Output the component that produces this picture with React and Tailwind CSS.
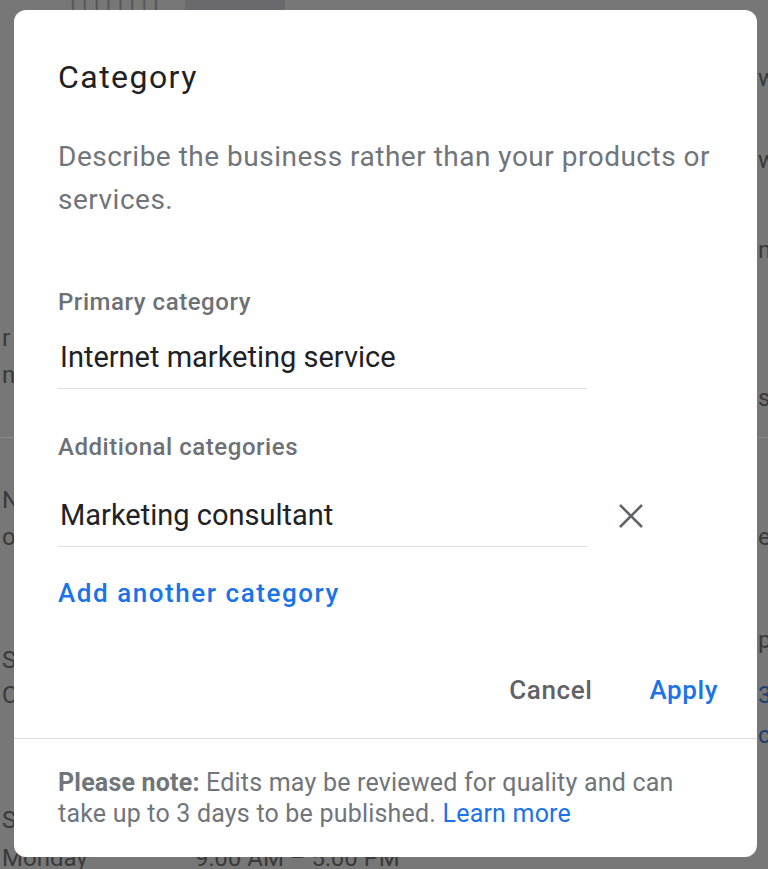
import React from "react";

function XIcon() {
  return (
    <svg width="28" height="28" viewBox="0 0 28 28" className="shrink-0">
      <path d="M3 3 L25 25 M25 3 L3 25" stroke="#5f6368" strokeWidth="2.5" fill="none" />
    </svg>
  );
}

function BgRow({ h, left, right, leftMt = "", rightMt = "", rightBlue = false }) {
  return (
    <div className={`flex items-start ${h}`}>
      <div className={`w-[758px] pl-[2px] shrink-0 ${leftMt}`}>
        <span className="leading-[36px]">{left}</span>
      </div>
      <div className={`${rightMt} ${rightBlue ? "text-[#1f3f70]" : ""}`}>
        <span className="leading-[36px]">{right}</span>
      </div>
    </div>
  );
}

export default function App() {
  return (
    <div
      className="relative w-[768px] h-[869px] overflow-hidden bg-[#777777] text-[#3a3a3a] text-[24px]"
      style={{ fontFamily: "Roboto, 'Noto Sans', sans-serif" }}
    >
      {/* background page (dimmed) */}
      <div className="flex flex-col">
        <div className="h-[60px] flex items-start gap-[20px] pl-[70px]">
          <span className="leading-[8px] text-[#555] tracking-[6px]">||||||||</span>
          <div className="w-[100px] h-[10px] bg-[#6a6a6e]" />
        </div>
        <BgRow h="h-[36px]" right="w" />
        <div className="h-[46px]" />
        <BgRow h="h-[36px]" right="w" />
        <div className="h-[54px]" />
        <BgRow h="h-[36px]" right="n" />
        <div className="h-[52px]" />
        <BgRow h="h-[36px]" left="r" />
        <div className="h-[1px]" />
        <BgRow h="h-[60px]" left="n" right="s" rightMt="mt-[23px]" />
        <div className="h-[20px]" />
        <div className="h-[1px] bg-[#8a8a8a]" />
        <div className="h-[44px]" />
        <BgRow h="h-[36px]" left="N" />
        <div className="h-[1px]" />
        <BgRow h="h-[36px]" left="o" right="e" />
        <div className="h-[67px]" />
        <BgRow h="h-[55px]" left="S" right="p" leftMt="mt-[20px]" />
        <BgRow h="h-[36px]" left="C" right="3" rightBlue />
        <div className="h-[4px]" />
        <BgRow h="h-[36px]" right="ce" rightBlue />
        <div className="h-[49px]" />
        <BgRow h="h-[36px]" left="S" />
        <div className="h-[2px]" />
        <div className="flex items-start h-[36px] pl-[2px]">
          <span className="leading-[36px] w-[193px]">Monday</span>
          <span className="leading-[36px]">9:00 AM – 5:00 PM</span>
        </div>
      </div>

      {/* dialog */}
      <div className="absolute left-[14px] top-[10px] w-[743px] h-[847px] rounded-[12px] bg-white flex flex-col">
        <div className="px-[44px] flex flex-col">
          <h1 className="mt-[49px] text-[32px] leading-[36px] text-[#202124] font-normal tracking-[1.45px]">Category</h1>
          <p className="mt-[40px] text-[28px] leading-[43px] text-[#70757a] tracking-[0.5px]">
            Describe the business rather than your products or
            <br />
            services.
          </p>
          <div className="mt-[66px] text-[24px] leading-[30px] font-medium text-[#6d7175] tracking-[0.55px]">Primary category</div>
          <div className="mt-[22px] w-[529px] pl-[2px] pb-[13px] border-b border-[#e0e0e0] text-[29px] leading-[36px] text-[#202124]">
            Internet marketing service
          </div>
          <div className="mt-[43px] text-[24px] leading-[30px] font-medium text-[#6d7175] tracking-[0.55px]">Additional categories</div>
          <div className="mt-[35px] flex items-center gap-[30px]">
            <div className="w-[529px] pl-[2px] pb-[13px] border-b border-[#e0e0e0] text-[29px] leading-[36px] text-[#202124]">
              Marketing consultant
            </div>
            <div className="-mt-[13px]">
              <XIcon />
            </div>
          </div>
          <div className="mt-[31px] text-[26px] leading-[30px] font-medium text-[#1a73e8] tracking-[1.55px]">
            Add another category
          </div>
        </div>
        <div className="mt-[67px] flex justify-end items-center gap-[57px] pr-[39px] text-[26px] leading-[30px] font-medium tracking-[0.6px]">
          <button className="text-[#5f6368]">Cancel</button>
          <button className="text-[#1a73e8]">Apply</button>
        </div>
        <div className="mt-[33px] h-[1px] bg-[#dadce0]" />
        <p className="mt-[28px] px-[44px] text-[25px] leading-[31px] text-[#70757a] tracking-[0.2px]">
          <span className="font-bold">Please note:</span> Edits may be reviewed for quality and can
          <br />
          take up to 3 days to be published. <span className="text-[#1a73e8]">Learn more</span>
        </p>
      </div>
    </div>
  );
}
